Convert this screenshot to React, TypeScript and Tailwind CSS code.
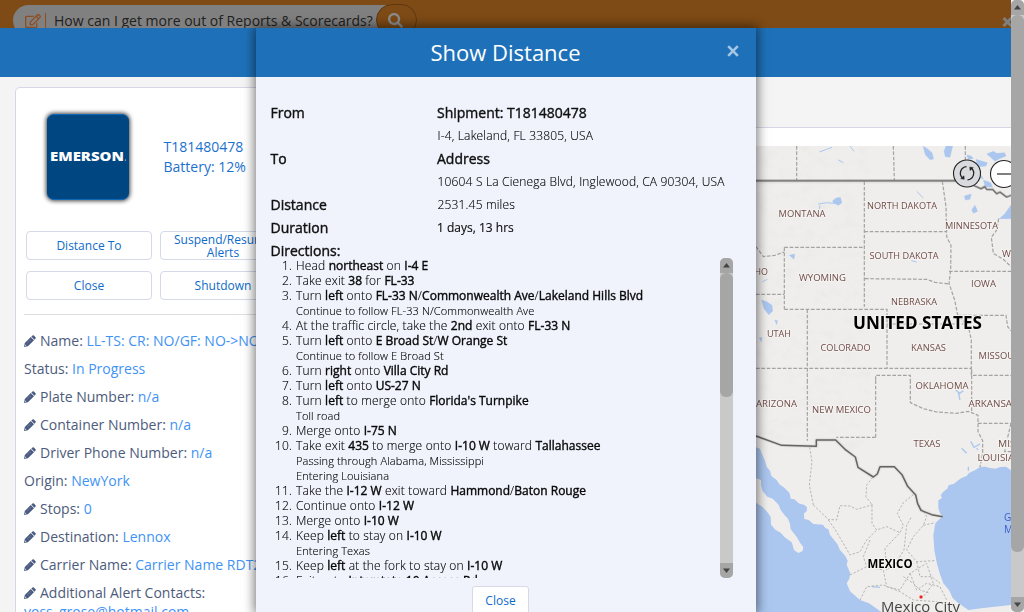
import { FaRegEdit, FaSearch } from "react-icons/fa";
import type { ReactNode } from "react";

function B({ children }: { children: ReactNode }) {
  return <b className="font-normal tracking-normal [-webkit-text-stroke:0.4px_#111]">{children}</b>;
}

function Light({ children }: { children: ReactNode }) {
  return <span className="ml-[0.5px] text-[12px] font-light tracking-[0.17px] text-black [-webkit-text-stroke:0.12px_#000]">{children}</span>;
}

function Pencil() {
  return (
    <svg viewBox="0 0 12 12" className="mr-1 inline-block size-3 align-[-1px]" fill="#4a5a80">
      <path d="M8.500.6a1 1 0 0 1 1.400 0l1.600 1.600a1 1 0 0 1 0 1.400L10.400 4.700 7.300 1.600z" />
      <path fillRule="evenodd" d="M6.800 2 10 5.200 3.900 11.200 0 12 .8 8zM1.400 9.600 1.100 10.900 2.400 10.600z" />
      <path d="M7.300 4 3.200 8.100" stroke="#8f9bb8" strokeWidth=".5" />
    </svg>
  );
}

function Bar({ thumb }: { thumb: string }) {
  return (
    <div className="flex w-[13px] shrink-0 flex-col overflow-hidden rounded-[5px] bg-[#c9c9c9]">
      <div className="flex h-[15px] shrink-0 items-center justify-center bg-[#a6a6a6]">
        <svg width="7" height="5" viewBox="0 0 7 5"><path d="M3.500 0 7 4.500H0z" fill="#444" /></svg>
      </div>
      <div className={"rounded-[6px] bg-[#a6a6a6] " + thumb} />
      <div className="mt-auto flex h-[15px] shrink-0 items-center justify-center bg-[#a6a6a6]">
        <svg width="7" height="5" viewBox="0 0 7 5"><path d="M3.500 5 7 .5H0z" fill="#444" /></svg>
      </div>
    </div>
  );
}

const fields: { label: string; value: string; edit: boolean }[] = [
  { label: "Name:", value: "LL-TS: CR: NO/GF: NO->NO", edit: true },
  { label: "Status:", value: "In Progress", edit: false },
  { label: "Plate Number:", value: "n/a", edit: true },
  { label: "Container Number:", value: "n/a", edit: true },
  { label: "Driver Phone Number:", value: "n/a", edit: true },
  { label: "Origin:", value: "NewYork", edit: false },
  { label: "Stops:", value: "0", edit: true },
  { label: "Destination:", value: "Lennox", edit: true },
  { label: "Carrier Name:", value: "Carrier Name RDT2", edit: true },
  { label: "Additional Alert Contacts:", value: "", edit: true },
];

const steps: { main: ReactNode; notes?: string[] }[] = [
  { main: <>Head <B>northeast</B> on <B>I-4 E</B></> },
  { main: <>Take exit <B>38</B> for <B>FL-33</B></> },
  { main: <>Turn <B>left</B> onto <B>FL-33 N</B>/<B>Commonwealth Ave</B>/<B>Lakeland Hills Blvd</B></>, notes: ["Continue to follow FL-33 N/Commonwealth Ave"] },
  { main: <>At the traffic circle, take the <B>2nd</B> exit onto <B>FL-33 N</B></> },
  { main: <>Turn <B>left</B> onto <B>E Broad St</B>/<B>W Orange St</B></>, notes: ["Continue to follow E Broad St"] },
  { main: <>Turn <B>right</B> onto <B>Villa City Rd</B></> },
  { main: <>Turn <B>left</B> onto <B>US-27 N</B></> },
  { main: <>Turn <B>left</B> to merge onto <B>Florida's Turnpike</B></>, notes: ["Toll road"] },
  { main: <>Merge onto <B>I-75 N</B></> },
  { main: <>Take exit <B>435</B> to merge onto <B>I-10 W</B> toward <B>Tallahassee</B></>, notes: ["Passing through Alabama, Mississippi", "Entering Louisiana"] },
  { main: <>Take the <B>I-12 W</B> exit toward <B>Hammond</B>/<B>Baton Rouge</B></> },
  { main: <>Continue onto <B>I-12 W</B></> },
  { main: <>Merge onto <B>I-10 W</B></> },
  { main: <>Keep <B>left</B> to stay on <B>I-10 W</B></>, notes: ["Entering Texas"] },
  { main: <>Keep <B>left</B> at the fork to stay on <B>I-10 W</B></> },
  { main: <>Exit onto <B>Interstate 10 Access Rd</B></> },
];

const labels: { t: string; x: number; y: number; w: number }[] = [
  { t: "MONTANA", x: 778.500, y: 217, w: 47 },
  { t: "NORTH DAKOTA", x: 867, y: 209, w: 70 },
  { t: "MINNESOTA", x: 945, y: 229, w: 53 },
  { t: "SOUTH DAKOTA", x: 869.500, y: 259, w: 69 },
  { t: "WYOMING", x: 799, y: 281, w: 47 },
  { t: "IOWA", x: 971, y: 287, w: 25 },
  { t: "NEBRASKA", x: 891, y: 305, w: 46 },
  { t: "UTAH", x: 767, y: 337, w: 24 },
  { t: "COLORADO", x: 820.500, y: 351, w: 50 },
  { t: "KANSAS", x: 911, y: 351, w: 35 },
  { t: "MISSOURI", x: 978.500, y: 359, w: 44 },
  { t: "IDAHO", x: 740, y: 275, w: 28 },
  { t: "WISCONSIN", x: 1002, y: 257, w: 53 },
  { t: "OKLAHOMA", x: 915.500, y: 389, w: 53 },
  { t: "ARIZONA", x: 756, y: 407, w: 41 },
  { t: "NEW MEXICO", x: 812, y: 413, w: 59 },
  { t: "ARKANSAS", x: 968.500, y: 407, w: 49 },
  { t: "TEXAS", x: 913.500, y: 447, w: 27 },
  { t: "MISSISSIPPI", x: 998, y: 447, w: 55 },
  { t: "LOUISIANA", x: 977.500, y: 461, w: 50 },
];

function Map() {
  return (
    <svg width="271" height="466" viewBox="740 146 271 466" className="block font-['Open_Sans',sans-serif]">
      <defs>
        <filter id="relief" x="0" y="0" width="100%" height="100%">
          <feTurbulence type="fractalNoise" baseFrequency="0.07 0.1" numOctaves="4" seed="8" />
          <feColorMatrix values="0 0 0 0 .8  0 0 0 0 .8  0 0 0 0 .78  1.8 0 0 0 -.85" />
        </filter>
      </defs>
      <rect x="740" y="146" width="271" height="466" fill="#efeeec" />
      <path d="M740 146H850V345L870 380 862 430 800 450 740 430z" filter="url(#relief)" opacity=".8" />
      <g transform="translate(750 370) scale(.33333)">
        <path d="M0 225 30 236 36 252 45 272 50 290 60 302 64 318 80 330 88 343 104 354 119 370 122 386 133 388 146 400 163 405 171 412 170 424 162 430 163 447 176 450 190 462 219 464 226 474 235 478 240 494 248 505 262 522 270 540 286 558 293 572 290 584 301 610 298 626 290 640 300 664 330 690 357 700 400 730H0z" fill="#abc6ef" />
        <path d="M18 324 33 330V345L38 364 52 380 68 386 78 396 86 405 92 420 103 434 114 446 120 462 122 478 142 503 150 518 160 531 158 543 145 549 132 540 125 517 104 502 92 488 77 480 63 464 62 440 50 424 37 410 18 398z" fill="#efeeec" />
        <path d="M783 301 768 290 751 291 736 296 720 294 706 290 690 291 676 300 657 309 650 318 636 323 626 330 612 341 596 346 592 356 580 365 572 376 576 384 565 391 565 415 570 430 578 440 568 448 556 460 550 496 553 540 561 582 570 613 580 640 597 660 608 684 622 697 655 720 700 714 783 705z" fill="#abc6ef" />
        <path d="M785 716 750 712 700 716 655 724 640 730H785z" fill="#efeeec" />
        <path d="M617 60 629 70 640 62M625 67 630 90M635 235 650 250M662 214 672 232 690 222M680 234 684 240M365 650 390 652M655 290 655 302" fill="none" stroke="#abc6ef" strokeWidth="4" />
      </g>
      <g fill="#abc6ef" stroke="#abc6ef" strokeWidth="1" transform="translate(750 140) scale(.33333)">
        <path d="M519 18 532 26 546 38 551 57 540 59 526 44zM588 18H608L600 52 586 50 582 34zM710 42 730 34 740 40 764 38 768 48 748 56 735 64 722 52zM650 45 664 48 670 56 655 58zM678 58 712 68 708 78 690 80 680 70zM783 195V236H748L764 222zM643 168 664 162 660 178 646 180zM665 210 675 196 683 214 670 220zM35 480 52 486 66 496 68 514 56 524 42 506zM118 346 134 342 132 358zM248 182 258 174 271 172 276 188 266 196 250 190zM74 540 83 542 80 554zM28 594 36 592 34 606zM700 120 722 128 728 142 706 140zM662 85 688 98 700 116 680 112z" />
        <path d="M208 36 230 28 246 22M265 60 280 68M300 18 312 34M500 154 520 174M205 192 230 188 250 190M210 196 208 208M484 362 500 366M36 426 52 418" fill="none" strokeWidth="3" />
      </g>
      <g fill="none" stroke="#a3a3a1" strokeWidth="3.600" strokeDasharray="11 5">
        <g transform="translate(750 140) scale(.33333)">
          <path d="M140 18V120M430 18 433 120M646 18V60M343 124V500M343 275H590M577 124 588 200 590 290 603 316 602 390 597 430 614 480 623 525 655 560 664 600V690M345 416 530 418 555 427 597 432M597 394H783M103 322H343M103 322V508M103 508H411V685M18 320 40 350 74 346 103 336M18 463H103M172 508V720M411 552H650M18 685H664V706H783M623 526H768L773 560 783 572M746 236 740 270 724 292 730 340 760 358 783 380M377 720V706H481V720" />
        </g>
        <g transform="translate(750 370) scale(.33333)">
          <path d="M172 30V212M377 202H259M377 202V30M481 30V98L520 116 560 126 620 130 655 124 684 136V185L698 212V250L690 291M665 0V126M684 160H783M783 160 772 206 764 245H783" />
        </g>
      </g>
      <g fill="none" stroke="#b0b0ae" strokeWidth="2.800" strokeDasharray="7 5" transform="translate(750 370) scale(.33333)">
        <path d="M179 232 186 275 178 345 190 405M190 405 235 448 260 450 270 407 300 408 320 418 368 404M368 322 350 345 348 380 366 404 366 460 380 480 410 470 450 488M235 450 255 478 280 520 300 555 330 545 350 510 380 480M490 374 460 398 442 430 460 466 450 488 405 535 410 600 440 575 462 540 470 466 485 440M500 395 530 440 520 466 490 500 470 540 500 575 553 572M520 466 555 458M300 615 350 590 400 600 410 650 450 660 480 610 530 580 550 640 520 680M330 690 350 650 400 645 450 665 490 690 560 695M480 610 500 660 530 640 570 650 590 690M360 510 340 560 350 590M500 575 510 620 545 620 570 640M460 620 490 640 510 660 540 670" />
      </g>
      <g fill="none" stroke="#c4c4c2" strokeWidth="10" strokeLinejoin="round" opacity=".4">
        <path transform="translate(750 140) scale(.33333)" d="M0 124H645" />
        <path transform="translate(750 370) scale(.33333)" d="M0 191 18 198 95 226 199 229V210H257L285 238 316 261 324 292 370 321 382 312 390 290H433L456 314 473 349 497 375 503 401 513 421 545 434 578 440" />
      </g>
      <g fill="none" stroke="#636363" strokeWidth="4.500" strokeLinejoin="round">
        <path transform="translate(750 140) scale(.33333)" d="M0 122H645L670 136 693 146 704 140 710 148 728 148 740 161 750 156 770 171 783 166" />
        <path transform="translate(750 370) scale(.33333)" d="M0 191 18 198 95 226 199 229V210H257L285 238 316 261 324 292 370 321 382 312 390 290H433L456 314 473 349 497 375 503 401 513 421 545 434 578 440" />
      </g>
      <g fontSize="9.500" fill="#704c48" stroke="#f4f3f1" strokeWidth="2" paintOrder="stroke">
        {labels.map((l) => (
          <text key={l.t} x={l.x} y={l.y} textLength={l.w} lengthAdjust="spacingAndGlyphs">{l.t}</text>
        ))}
      </g>
      <g fill="#000" stroke="#f4f3f1" strokeWidth="2" paintOrder="stroke" fontWeight="700">
        <text x="853" y="329" fontSize="17" textLength="129" lengthAdjust="spacingAndGlyphs">UNITED STATES</text>
        <text x="867.500" y="568" fontSize="12" textLength="45" lengthAdjust="spacingAndGlyphs">MEXICO</text>
      </g>
      <circle cx="921" cy="597" r="2" fill="#e5241d" stroke="#fff" strokeWidth=".6" />
      <text x="881" y="612" fontSize="14" fill="#444" textLength="79" lengthAdjust="spacingAndGlyphs">Mexico City</text>
      <g fontSize="10" fill="#3a5fc8"><text x="1004" y="521">Gulf of</text><text x="1004" y="533">Mexico</text></g>
      <g stroke="#222" strokeWidth="1.100">
        <circle cx="967" cy="173.500" r="13.500" fill="#d9dadd" />
        <circle cx="1004" cy="174" r="13.500" fill="#fff" />
        <path d="M997 174H1011" strokeWidth="1.500" stroke="#555" />
        <path d="M966.500 166.600A6.600 6.600 0 0 0 962.500 178M967.500 179.800A6.600 6.600 0 0 0 971.500 168.300" fill="none" strokeWidth="1.300" />
        <path d="M960.700 178.600 964.200 179.300 964 175.800zM973.300 167.700 969.800 167 970 170.500z" fill="#222" strokeWidth=".5" />
      </g>
    </svg>
  );
}

const actionButton =
  "flex h-[29px] w-[126px] shrink-0 items-center justify-center rounded-[4px] border border-[#d5d9e8] bg-white text-center text-[12px] leading-[13px] text-[#0e6bc9]";

export default function App() {
  return (
    <div className="relative flex h-[612px] w-[1024px] overflow-hidden bg-[#f4f4f4] font-['Open_Sans',sans-serif]">
      <div className="flex w-[1011px] flex-col overflow-hidden">
        <header className="flex h-7 shrink-0 items-start justify-between overflow-hidden bg-[#7e4a15]">
          <div className="ml-[13px] mt-1 flex items-start">
            <div className="mt-px flex h-[31px] w-[374px] items-center rounded-l-full rounded-r-[14px] bg-[#808080] pl-3 text-[14px] text-[#202020]">
              <FaRegEdit className="size-4 text-[#8c4e22]" />
              <span className="ml-[4px] h-4 w-px bg-[#8c4e22]" />
              <span className="ml-[8px] whitespace-nowrap">How can I get more out of Reports &amp; Scorecards?</span>
            </div>
            <div className="-ml-[11px] flex h-8 w-[41px] items-center justify-center rounded-full border border-[#5f370f] bg-[#7e4a15]">
              <FaSearch className="-ml-[2px] mt-px size-[15px] text-[#8b8b8b]" />
            </div>
          </div>
          <svg width="10" height="12" viewBox="0 0 10 12" className="-mr-px mt-4"><path d="m1.500 2 8 8m0-8-8 8" stroke="#808080" strokeWidth="3" /></svg>
        </header>
        <div className="h-[49px] shrink-0 bg-[#1e71b9]" />
        <main className="flex grow">
          <section className="ml-[15px] mt-[10px] flex w-[400px] shrink-0 flex-col rounded-tl-[5px] border border-[#d5d6e8] bg-white pl-2">
            <div className="mt-[26px] flex items-center pl-[23px]">
              <div className="flex h-[86px] w-[82px] items-center justify-center rounded-[7px] border-y border-[#0d69b7] bg-[#004680] shadow-[0_0_4px_1px_#444]">
                <svg width="80" height="16" viewBox="0 0 80 16"><text x="2" y="12" fontSize="12.500" fontWeight="800" fill="#fff" textLength="74" lengthAdjust="spacingAndGlyphs">EMERSON</text><circle cx="77.500" cy="11" r=".6" fill="#fff" /></svg>
              </div>
              <div className="ml-[34.5px] text-[14px] leading-5 text-[#1c70cf]"><p>T181480478</p><p>Battery: 12%</p></div>
            </div>
            <div className="mt-[31px] grid grid-cols-[126px_126px] gap-x-2 gap-y-[11px] pl-[2px]">
              <button className={actionButton}>Distance To</button>
              <button className={actionButton}>Suspend/Resume Alerts</button>
              <button className={actionButton}>Close</button>
              <button className={actionButton}>Shutdown</button>
            </div>
            <hr className="mt-[14px] border-[#dedede]" />
            <div className="mt-3 text-[14px] leading-7 text-[#4d5b7c]">
              {fields.map((f) => (
                <p key={f.label} className="whitespace-nowrap">
                  {f.edit && <Pencil />}{f.label} <span className="text-[#3f93f5]">{f.value}</span>
                </p>
              ))}
              <p className="-mt-[5px] leading-5 text-[#3f93f5]">voss_grose@hotmail.com</p>
            </div>
          </section>
          <section className="ml-auto mt-[50px] flex w-[400px] flex-col items-end border-t border-[#d5d6e8] bg-white pt-[18px]">
            <Map />
          </section>
        </main>
      </div>
      <Bar thumb="h-[537px]" />

      <div className="absolute left-[256px] top-7 flex h-[584px] w-[500px] flex-col bg-[#f0f3fc] text-[14px] text-[#111] shadow-[0_0_10px_2px_rgba(0,0,0,.5)]">
        <div className="relative flex h-[49px] shrink-0 items-center justify-center bg-[#1e71b9] text-[22px] text-white">
          <span className="-ml-px">Show Distance</span>
          <svg width="12" height="12" viewBox="0 0 12 12" className="absolute left-[471px] top-[17px]"><path d="m1.200 1.200 9.600 9.600m0-9.600-9.600 9.600" stroke="#a5c6e3" strokeWidth="2.600" /></svg>
        </div>
        <div className="mt-6 grid auto-rows-[23px] grid-cols-[166.5px_1fr] items-center pl-[14.5px]">
          <B>From</B><B>Shipment: T181480478</B>
          <span /><Light>I-4, Lakeland, FL 33805, USA</Light>
          <B>To</B><B>Address</B>
          <span /><Light>10604 S La Cienega Blvd, Inglewood, CA 90304, USA</Light>
          <B>Distance</B><Light>2531.45 miles</Light>
          <B>Duration</B><span className="text-[12px] [-webkit-text-stroke:0.15px_#111]">1 days, 13 hrs</span>
          <B>Directions:</B>
        </div>
        <div className="-mt-[4px] flex h-80 shrink-0 pl-[14px]">
          <ol className="w-[450px] overflow-hidden">
            {steps.map((s, i) => (
              <li key={i} className="flex whitespace-nowrap text-[12px] font-light leading-[15px] tracking-[0.17px] text-black [-webkit-text-stroke:0.12px_#000]">
                <span className="w-[22px] shrink-0 text-right">{i + 1}.</span>
                <div className="ml-[4px]">
                  <p>{s.main}</p>
                  {s.notes?.map((n) => <p key={n} className="text-[11px] tracking-[0.12px]">{n}</p>)}
                </div>
              </li>
            ))}
          </ol>
          <Bar thumb="h-[124px]" />
        </div>
        <button className="ml-[-11px] mt-[8px] h-[29px] w-[57px] shrink-0 self-center rounded-[3px] border border-[#d5d9e8] bg-white text-[12px] text-[#0e6bc9]">Close</button>
      </div>
    </div>
  );
}
